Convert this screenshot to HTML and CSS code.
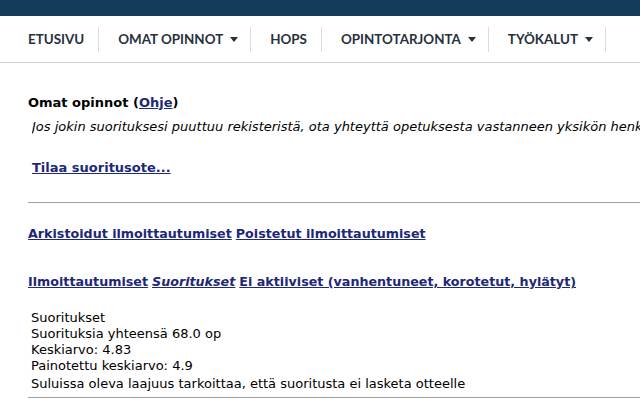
FILE: index.html
```html
<!DOCTYPE html>
<html lang="fi">
<head>
<meta charset="utf-8">
<link rel="stylesheet" href="styles.css">
</head>
<body>
<div class="topbar"></div>
<nav class="nav">
  <a class="nav-item">ETUSIVU</a>
  <a class="nav-item has-menu">OMAT OPINNOT <span class="caret"></span></a>
  <a class="nav-item">HOPS</a>
  <a class="nav-item has-menu">OPINTOTARJONTA <span class="caret"></span></a>
  <a class="nav-item has-menu">TYÖKALUT <span class="caret"></span></a>
</nav>
<main class="content">
  <h1 class="title">Omat opinnot (<a class="link" href="#">Ohje</a>)</h1>
  <p class="note">Jos jokin suorituksesi puuttuu rekisteristä, ota yhteyttä opetuksesta vastanneen yksikön henkilökuntaan.</p>
  <p class="order"><a class="link" href="#">Tilaa suoritusote...</a></p>
  <hr class="rule">
  <p class="links"><a class="link" href="#">Arkistoidut ilmoittautumiset</a> <a class="link" href="#">Poistetut ilmoittautumiset</a></p>
  <p class="links tabs"><a class="link" href="#">Ilmoittautumiset</a> <a class="link current" href="#">Suoritukset</a> <a class="link" href="#">Ei aktiiviset (vanhentuneet, korotetut, hylätyt)</a></p>
  <div class="summary">
    <div>Suoritukset</div>
    <div>Suorituksia yhteensä 68.0 op</div>
    <div>Keskiarvo: 4.83</div>
    <div>Painotettu keskiarvo: 4.9</div>
    <div class="hint">Suluissa oleva laajuus tarkoittaa, että suoritusta ei lasketa otteelle</div>
  </div>
  <div class="bottom-rule"></div>
</main>
</body>
</html>
```
FILE: styles.css
```css
html, body { margin: 0; padding: 0; background: #fff; }
body { font-family: "DejaVu Sans", Verdana, sans-serif; font-size: 13px; color: #000; overflow: hidden; width: 640px; height: 400px; }

.topbar { height: 16px; background: #143a5a; }

.nav {
  display: flex;
  align-items: center;
  height: 46px;
  padding-left: 9px;
  border-bottom: 1px solid #c9d4dd;
  font-family: Lato, "Open Sans", sans-serif;
  font-weight: 700;
  font-size: 13.4px;
  color: #27313c;
  white-space: nowrap;
}
.nav-item {
  display: flex;
  align-items: center;
  height: 25px;
  padding: 0 14px 0 19px;
  border-right: 1px solid #d7dde3;
}
.nav-item.has-menu { padding-right: 12px; }
.caret {
  display: inline-block;
  width: 0; height: 0;
  margin-left: 7px;
  border-left: 4.5px solid transparent;
  border-right: 4.5px solid transparent;
  border-top: 5px solid #27313c;
}

.content { padding: 0 0 0 28px; }
.title { font-size: 13px; font-weight: bold; margin: 0; padding-top: 32px; line-height: 16px; }
.link { color: #1d2878; font-weight: bold; text-decoration: underline; }
.note { margin: 8px 0 0 4px; font-style: italic; line-height: 16px; white-space: nowrap; overflow: hidden; }
.order { margin: 25px 0 0 4px; line-height: 16px; }
.rule { border: 0; border-top: 1px solid #a0a0a0; margin: 26px 0 0 0; height: 0; }
.links { margin: 23px 0 0 0; line-height: 16px; white-space: nowrap; font-size: 12.7px; }
.tabs { margin-top: 32px; }
.current { font-style: italic; }
.summary { margin: 20px 0 0 3px; line-height: 16px; }
.hint { margin-top: 2px; white-space: nowrap; }
.bottom-rule { border-top: 1px solid #a0a0a0; margin-top: 5px; }
```
